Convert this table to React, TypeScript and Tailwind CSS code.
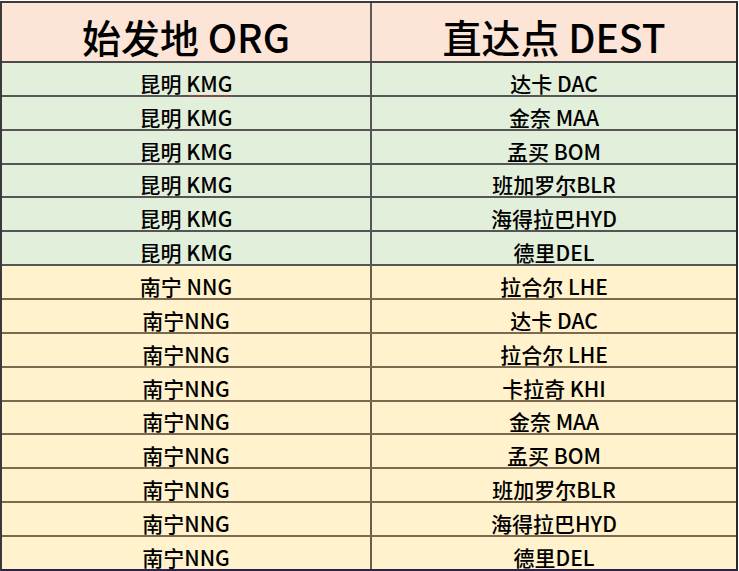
import React from "react";

const rows: { org: string; dest: string; color: "g" | "y"; squiggle?: boolean }[] = [
  { org: "昆明 KMG", dest: "达卡 DAC", color: "g", squiggle: true },
  { org: "昆明 KMG", dest: "金奈 MAA", color: "g" },
  { org: "昆明 KMG", dest: "孟买 BOM", color: "g" },
  { org: "昆明 KMG", dest: "班加罗尔BLR", color: "g" },
  { org: "昆明 KMG", dest: "海得拉巴HYD", color: "g" },
  { org: "昆明 KMG", dest: "德里DEL", color: "g" },
  { org: "南宁 NNG", dest: "拉合尔 LHE", color: "y" },
  { org: "南宁NNG", dest: "达卡 DAC", color: "y" },
  { org: "南宁NNG", dest: "拉合尔 LHE", color: "y" },
  { org: "南宁NNG", dest: "卡拉奇 KHI", color: "y" },
  { org: "南宁NNG", dest: "金奈 MAA", color: "y" },
  { org: "南宁NNG", dest: "孟买 BOM", color: "y" },
  { org: "南宁NNG", dest: "班加罗尔BLR", color: "y" },
  { org: "南宁NNG", dest: "海得拉巴HYD", color: "y" },
  { org: "南宁NNG", dest: "德里DEL", color: "y" },
];

const font = { fontFamily: '"Noto Sans CJK SC", "Noto Sans", sans-serif' };

export default function App() {
  return (
    <div className="w-[739px] h-[571px] bg-white overflow-hidden" style={font}>
      <div className="mt-[1px] w-[738px] h-[570px] flex flex-col border-t-2 border-l-2 border-r-2 border-b-2 border-t-[#3a3a3a] border-l-[#3a3a3a] border-r-[#2a2a2a] border-b-[#2e2148] box-border">
        <div className="h-[60px] flex bg-[#fce4d6] border-b-2 border-[#4a4a4a] text-black">
          <div className="w-[370px] border-r-2 border-[#5a5a5a] flex items-end justify-center pb-[1px] text-[39px] leading-[48px] font-medium">
            始发地 ORG
          </div>
          <div className="flex-1 flex items-end justify-center pb-[1px] text-[39px] leading-[48px] font-medium">
            直达点 DEST
          </div>
        </div>
        {rows.map((r, i) => (
          <div
            key={i}
            className={
              "flex-1 flex text-black text-[21px] font-medium " +
              (r.color === "g" ? "bg-[#e2efda] " : "bg-[#fff2cc] ") +
              (i < rows.length - 1
                ? r.color === "g"
                  ? "border-b-2 border-[#555555]"
                  : "border-b-2 border-[#7a6a50]"
                : "")
            }
          >
            <div
              className={
                "w-[370px] border-r-2 flex items-end justify-center leading-[23px] " +
                (r.color === "g" ? "border-[#555555]" : "border-[#6a5e4a]")
              }
            >
              {r.squiggle ? (
                <span>
                  昆明 <span className="underline decoration-wavy decoration-red-500 decoration-1 underline-offset-[2px]">KMG</span>
                </span>
              ) : (
                r.org
              )}
            </div>
            <div className="flex-1 flex items-end justify-center leading-[23px]">{r.dest}</div>
          </div>
        ))}
      </div>
    </div>
  );
}
